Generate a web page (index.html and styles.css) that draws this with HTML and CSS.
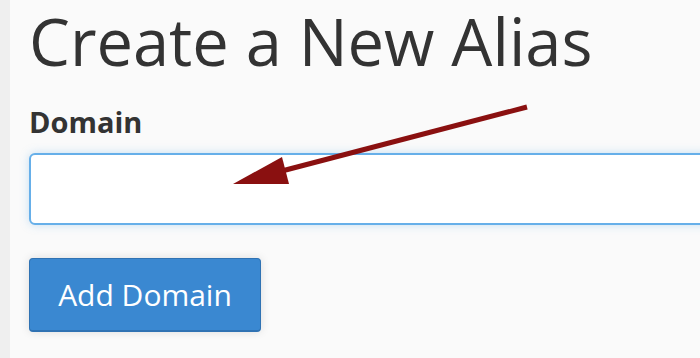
FILE: index.html
```html
<!DOCTYPE html>
<html lang="en">
<head>
    <meta charset="UTF-8">
    <meta name="viewport" content="width=device-width, initial-scale=1.0">
    <title>Create a New Alias</title>
    <link rel="stylesheet" href="styles.css">
</head>
<body>
<div class="page">
    <div class="content">
        <h1>Create a New Alias</h1>
        <form class="alias-form" onsubmit="return false;">
            <label for="domain">Domain</label>
            <input type="text" id="domain" class="domain-input">
            <button type="submit" class="btn-add">Add Domain</button>
        </form>
    </div>
    <!-- annotation arrow pointing at the field -->
    <svg class="arrow" width="700" height="358" viewBox="0 0 700 358">
        <line x1="527" y1="107" x2="278" y2="172" stroke="#8a1010" stroke-width="5" stroke-linecap="butt"/>
        <polygon points="233,184 282,157 289,184" fill="#8a1010"/>
    </svg>
</div>
</body>
</html>
```

FILE: styles.css
```css
html, body {
    margin: 0;
    padding: 0;
    height: 100%;
    overflow: hidden;
}
body {
    font-family: "Open Sans", "Noto Sans", sans-serif;
    background-color: #fafafa;
    color: #333;
}
.page {
    position: relative;
    height: 100%;
    border-left: 10px solid #efefef;
}
.content {
    padding-left: 19px;
    padding-top: 1px;
}
h1 {
    font-size: 65px;
    font-weight: 400;
    line-height: 1.2;
    margin: 1px 0 0 0;
    color: #333;
    white-space: nowrap;
}
.alias-form {
    display: flex;
    flex-direction: column;
    align-items: flex-start;
}
label {
    font-size: 29px;
    font-weight: 700;
    line-height: 1;
    margin-top: 27px;
    color: #333;
}
.domain-input {
    box-sizing: border-box;
    width: 720px;
    height: 72px;
    margin-top: 17px;
    padding: 0 14px;
    font-size: 28px;
    font-family: inherit;
    background: #fff;
    border: 2px solid #66afe9;
    border-radius: 6px;
    box-shadow: 0 0 10px rgba(102, 175, 233, 0.35);
    outline: none;
}
.btn-add {
    box-sizing: border-box;
    width: 232px;
    height: 74px;
    margin-top: 33px;
    font-family: inherit;
    font-size: 30px;
    color: #fff;
    background-color: #3a88d1;
    border: 1px solid #2f72b3;
    border-bottom-width: 2px;
    border-radius: 4px;
    box-shadow: 0 0 10px rgba(0, 0, 0, 0.12);
    cursor: pointer;
}
.arrow {
    position: absolute;
    left: -10px;
    top: 0;
    pointer-events: none;
}
```
